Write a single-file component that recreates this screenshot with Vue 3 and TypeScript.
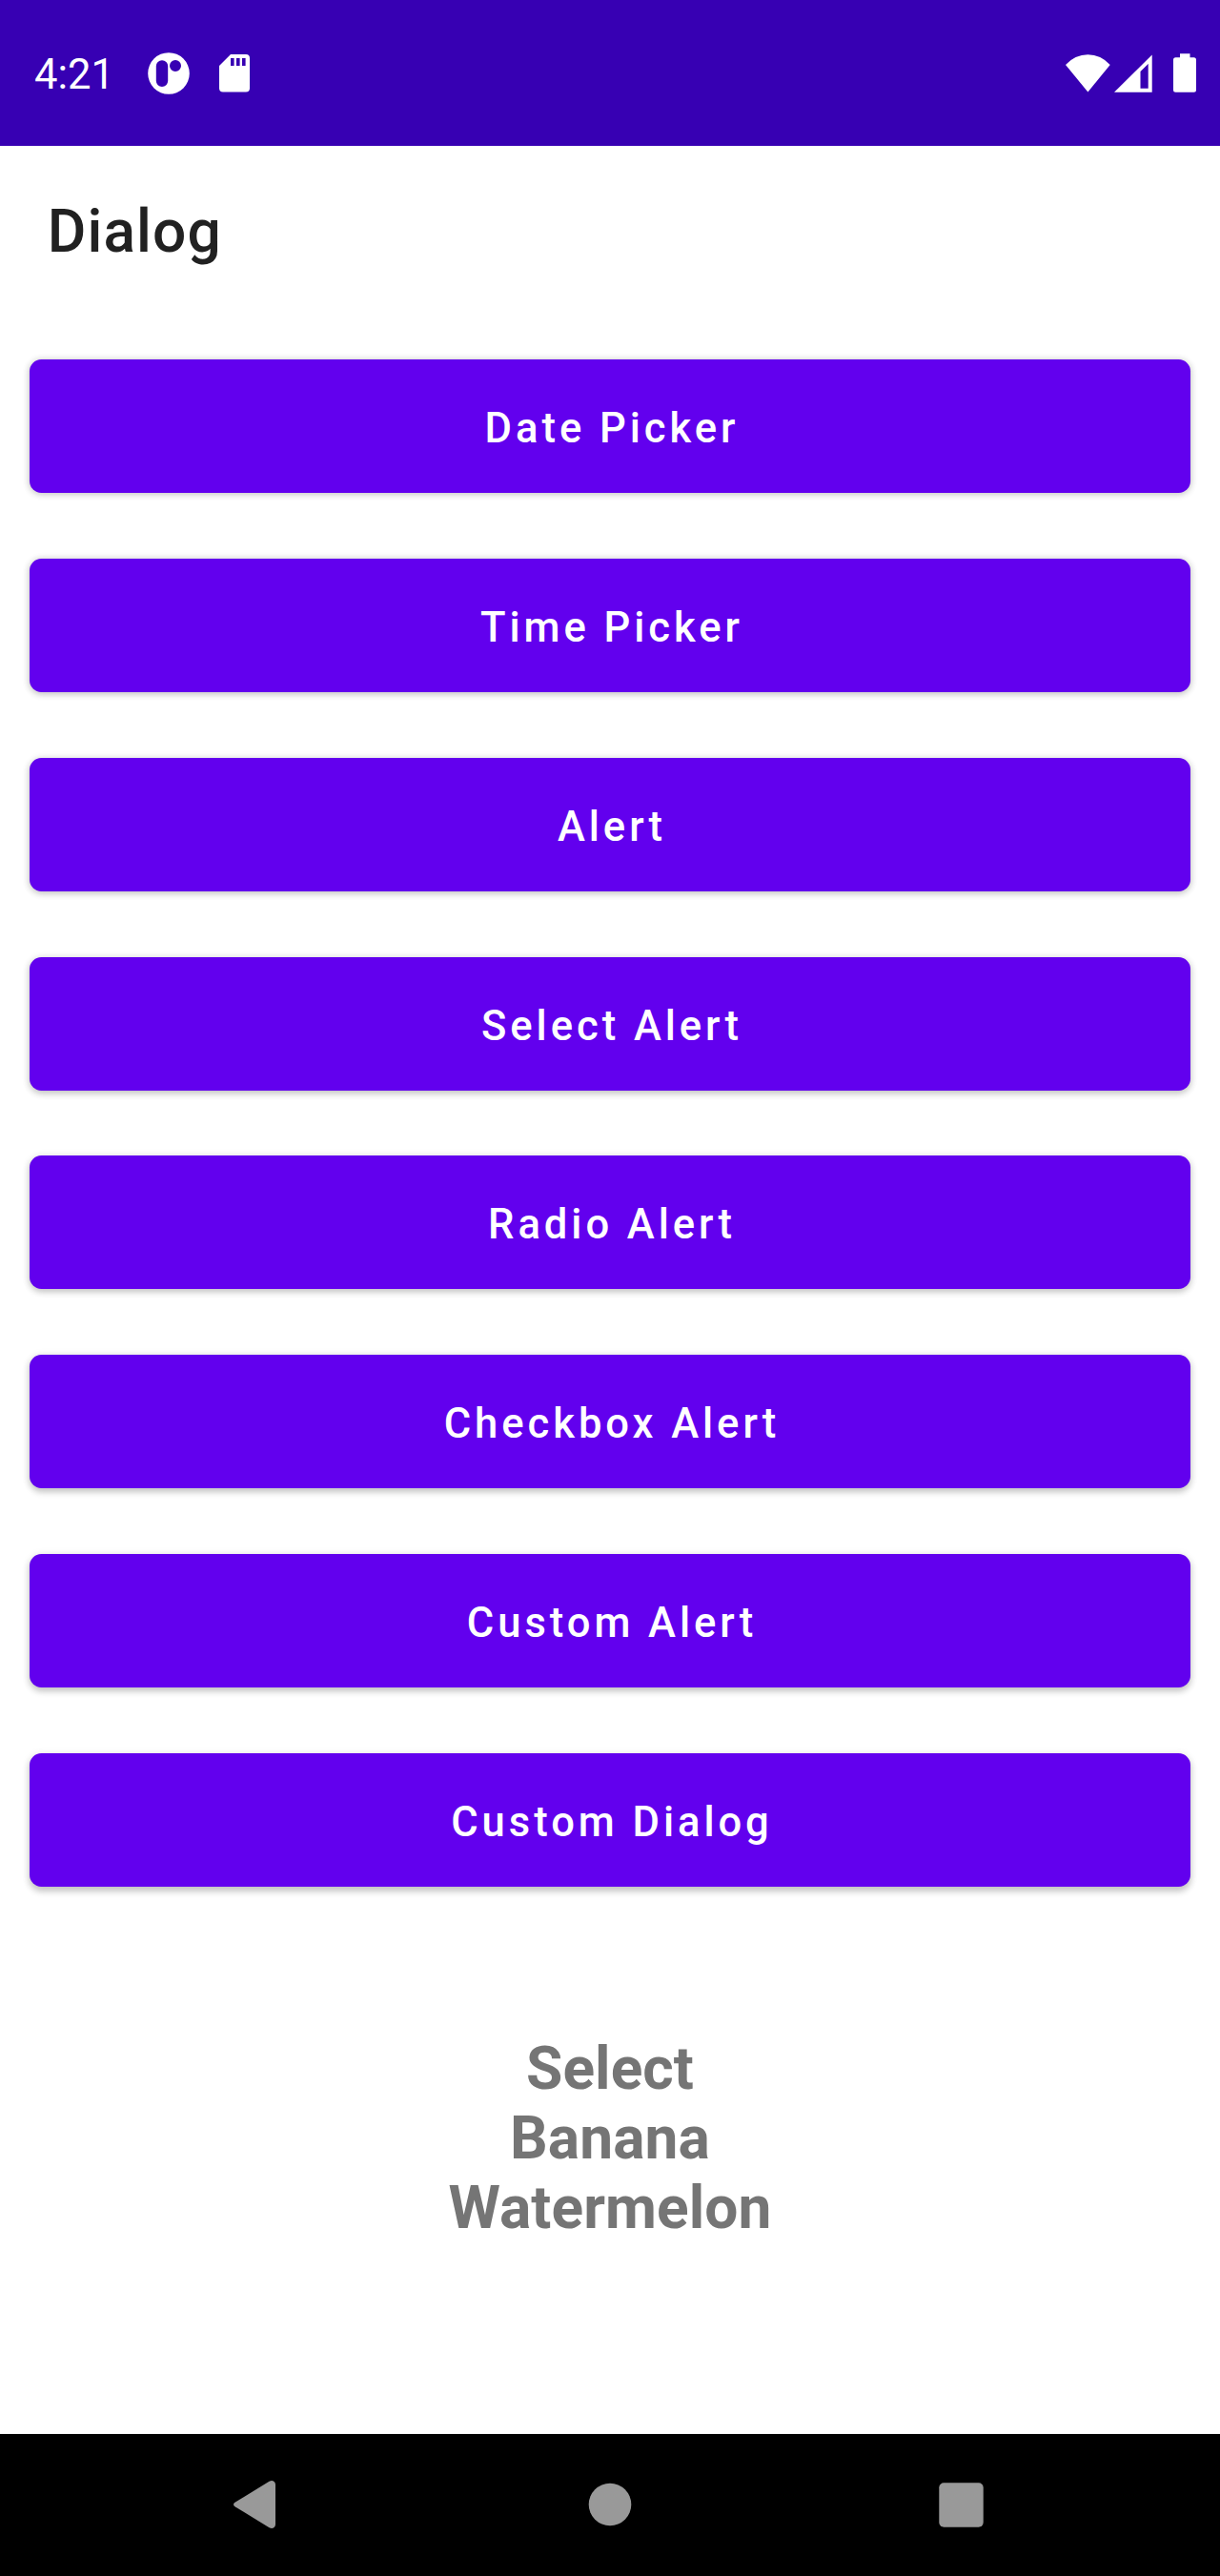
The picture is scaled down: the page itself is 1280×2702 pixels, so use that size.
<script setup lang="ts">
interface DialogAction {
  id: string
  label: string
}

const actions: DialogAction[] = [
  { id: 'date', label: 'Date Picker' },
  { id: 'time', label: 'Time Picker' },
  { id: 'alert', label: 'Alert' },
  { id: 'select', label: 'Select Alert' },
  { id: 'radio', label: 'Radio Alert' },
  { id: 'checkbox', label: 'Checkbox Alert' },
  { id: 'custom-alert', label: 'Custom Alert' },
  { id: 'custom-dialog', label: 'Custom Dialog' },
]

const result: string[] = ['Select', 'Banana', 'Watermelon']

const shadowStyle = (index: number) => ({
  boxShadow: `0 ${(1 + index * 0.5).toFixed(2)}px 7px rgba(0, 0, 0, 0.2), 0 1px 10px rgba(0, 0, 0, 0.09)`,
})
</script>

<template>
  <div class="screen">
    <header class="status">
      <div class="status-left">
        <span class="clock">4:21</span>
        <svg class="app-icon" width="44" height="44" viewBox="0 0 44 44">
          <path
            fill="#fff"
            fill-rule="evenodd"
            d="M22 .2a21.8 21.8 0 1 1 0 43.6a21.8 21.8 0 0 1 0-43.6zM15 8.2a6.2 6.2 0 0 0-6.2 6.2v15.4a6.2 6.2 0 0 0 12.4 0V14.4a6.2 6.2 0 0 0-6.2-6.2zM29 8a6 6 0 1 0 0 12a6 6 0 0 0 0-12z"
          />
        </svg>
        <svg class="sd-icon" width="32" height="40" viewBox="0 0 32 40">
          <path
            fill="#fff"
            fill-rule="evenodd"
            d="M12 0H28a4 4 0 0 1 4 4V35.5a4 4 0 0 1-4 4H4a4 4 0 0 1-4-4V12zM12 4v8h3.600V4zM18 4v8h3.600V4zM24 4v8h3.600V4z"
          />
        </svg>
      </div>
      <div class="status-right">
        <svg width="47" height="40" viewBox="0 0 47 40">
          <path fill="#fff" d="M0 11Q10 .3 23.400 .3T46.700 11L23.400 39.600z" />
        </svg>
        <svg class="signal-icon" width="40" height="40" viewBox="0 0 40 40">
          <path fill="#fff" fill-rule="evenodd" d="M39.700 .5V39.700H0zM35.700 10L27.500 18V35.700H35.700z" />
        </svg>
        <svg class="battery-icon" width="24" height="41" viewBox="0 0 24 41">
          <path
            fill="#fff"
            d="M7 .2H17.500V4.300H21.500a2.500 2.500 0 0 1 2.500 2.500V38.300a2.500 2.500 0 0 1-2.500 2.500H2.500a2.500 2.500 0 0 1-2.500-2.500V6.800a2.500 2.500 0 0 1 2.500-2.500H7z"
          />
        </svg>
      </div>
    </header>

    <h1 class="title">Dialog</h1>

    <main class="actions">
      <button
        v-for="(action, index) in actions"
        :key="action.id"
        type="button"
        class="action"
        :style="shadowStyle(index)"
      >
        {{ action.label }}
      </button>
    </main>

    <section class="result">
      <p v-for="line in result" :key="line">{{ line }}</p>
    </section>

    <nav class="nav">
      <svg width="44" height="52" viewBox="0 0 44 52">
        <path
          fill="#999"
          d="M1.600 23.700L37.500 1.700Q40 .3 42 1.400Q44 2.600 44 5V47Q44 49.400 42 50.600Q40 51.700 37.500 50.300L1.600 28.300Q0 27.300 0 26T1.600 23.700z"
        />
      </svg>
      <svg class="home-icon" width="46" height="46" viewBox="0 0 46 46">
        <circle cx="23" cy="23" r="22.3" fill="#999" />
      </svg>
      <svg width="47" height="47" viewBox="0 0 47 47">
        <rect x=".3" y=".3" width="46.4" height="46.4" rx="5" fill="#999" />
      </svg>
    </nav>
  </div>
</template>

<style>
body {
  margin: 0;
  background: #fff;
}
</style>

<style scoped>
.screen {
  width: 1280px;
  height: 2702px;
  display: flex;
  flex-direction: column;
  background: #fff;
  font-family: Roboto, sans-serif;
  overflow: hidden;
}

.status {
  flex: none;
  height: 153px;
  box-sizing: border-box;
  display: flex;
  justify-content: space-between;
  padding: 0 25px 0 36px;
  background: #3700b3;
  color: #fff;
}

.status-left,
.status-right {
  display: flex;
  align-items: center;
}

.status-left {
  height: 154px;
}

.status-right {
  height: 153px;
}

.clock {
  width: 119.3px;
  padding-top: 3px;
  font-size: 43.56px;
  line-height: 52px;
}

.sd-icon {
  margin-left: 30.4px;
}

.signal-icon {
  margin-left: 3.7px;
}

.battery-icon {
  margin-left: 22.3px;
}

.title {
  flex: none;
  margin: 0;
  height: 223.9px;
  box-sizing: border-box;
  padding: 53px 0 0 49.8px;
  font-size: 62.22px;
  font-weight: 500;
  line-height: 73px;
  letter-spacing: 0.0175em;
  color: #212121;
}

.actions {
  display: flex;
  flex-direction: column;
  gap: 68.89px;
  padding: 0 31px;
}

.action {
  height: 140px;
  margin: 0;
  padding: 5px 0 0 4px;
  border: 0;
  border-radius: 12.4px;
  background: #6200ee;
  color: #fff;
  font-family: inherit;
  font-size: 43.56px;
  font-weight: 500;
  line-height: 51px;
  letter-spacing: 0.091em;
  text-align: center;
}

.result {
  margin-top: 154px;
  color: #757575;
  font-size: 62.22px;
  font-weight: 700;
  line-height: 73px;
  letter-spacing: 0.1px;
  text-align: center;
}

.result p {
  margin: 0;
}

.nav {
  flex: none;
  height: 149px;
  box-sizing: border-box;
  margin-top: auto;
  padding: 0 248px 1px 245px;
  display: flex;
  align-items: center;
  justify-content: space-between;
  background: #000;
}

.home-icon {
  margin-left: 6px;
}
</style>
